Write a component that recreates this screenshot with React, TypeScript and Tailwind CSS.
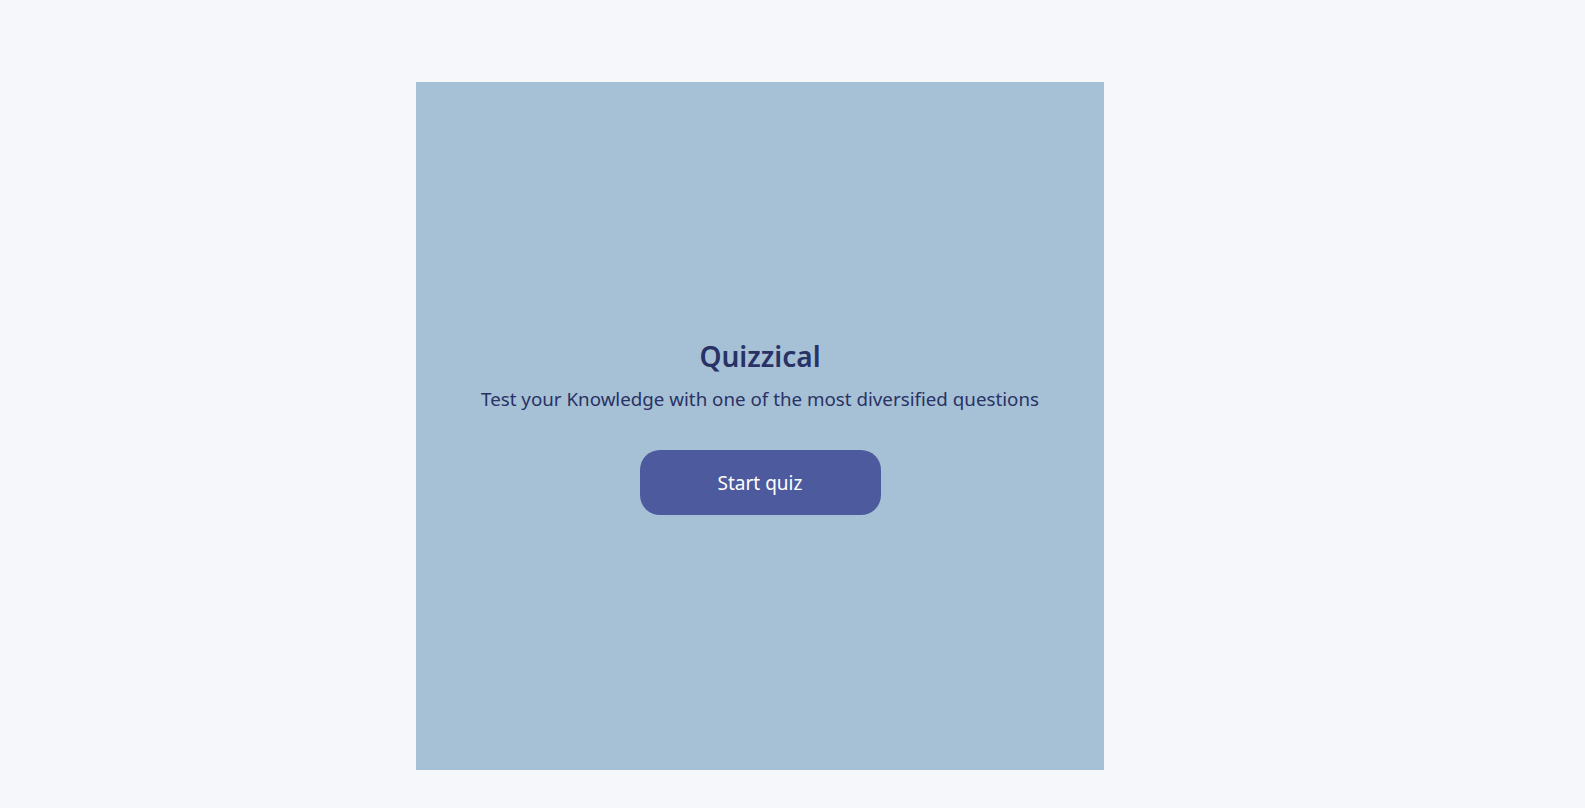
import React from "react";

const App = () => {
  return (
    <div
      className="min-h-screen w-full bg-[#f5f7fb] pt-[82px] pl-[416px]"
      style={{ fontFamily: '"Noto Sans", "Open Sans", sans-serif' }}
    >
      <div className="w-[688px] h-[688px] bg-[#a6c0d6] flex flex-col items-center pt-[260px]">
        <h1 className="text-[28px] font-[560] text-[#293264] leading-none">Quizzical</h1>
        <p className="mt-[20px] text-[18.75px] text-[#293264] leading-none">
          Test your Knowledge with one of the most diversified questions
        </p>
        <button className="mt-[41px] w-[241px] h-[65px] rounded-[20px] bg-[#4d5b9e] text-white text-[19px] pt-[2px]">
          Start quiz
        </button>
      </div>
    </div>
  );
};

export default App;
